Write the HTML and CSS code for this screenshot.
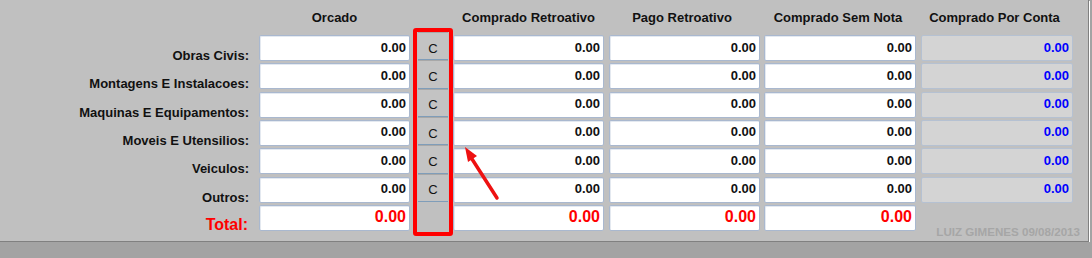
FILE: index.html
```html
<!DOCTYPE html>
<html lang="en">
<head>
  <meta charset="UTF-8">
  <title>Orcamento</title>
  <link rel="stylesheet" href="styles.css">
</head>
<body>
  <div class="panel">
    <div class="grid">
      <div></div>
      <div class="head">Orcado</div>
      <div></div>
      <div class="head">Comprado Retroativo</div>
      <div class="head">Pago Retroativo</div>
      <div class="head">Comprado Sem Nota</div>
      <div class="head">Comprado Por Conta</div>

      <div class="lbl">Obras Civis:</div>
      <input class="num c1" value="0.00" readonly>
      <input class="num c2" value="0.00" readonly>
      <input class="num c3" value="0.00" readonly>
      <input class="num c4" value="0.00" readonly>
      <input class="num c5 off" value="0.00" readonly>

      <div class="lbl">Montagens E Instalacoes:</div>
      <input class="num c1" value="0.00" readonly>
      <input class="num c2" value="0.00" readonly>
      <input class="num c3" value="0.00" readonly>
      <input class="num c4" value="0.00" readonly>
      <input class="num c5 off" value="0.00" readonly>

      <div class="lbl">Maquinas E Equipamentos:</div>
      <input class="num c1" value="0.00" readonly>
      <input class="num c2" value="0.00" readonly>
      <input class="num c3" value="0.00" readonly>
      <input class="num c4" value="0.00" readonly>
      <input class="num c5 off" value="0.00" readonly>

      <div class="lbl">Moveis E Utensilios:</div>
      <input class="num c1" value="0.00" readonly>
      <input class="num c2" value="0.00" readonly>
      <input class="num c3" value="0.00" readonly>
      <input class="num c4" value="0.00" readonly>
      <input class="num c5 off" value="0.00" readonly>

      <div class="lbl">Veiculos:</div>
      <input class="num c1" value="0.00" readonly>
      <input class="num c2" value="0.00" readonly>
      <input class="num c3" value="0.00" readonly>
      <input class="num c4" value="0.00" readonly>
      <input class="num c5 off" value="0.00" readonly>

      <div class="lbl">Outros:</div>
      <input class="num c1" value="0.00" readonly>
      <input class="num c2" value="0.00" readonly>
      <input class="num c3" value="0.00" readonly>
      <input class="num c4" value="0.00" readonly>
      <input class="num c5 off" value="0.00" readonly>

      <div class="lbl total">Total:</div>
      <input class="num c1 red" value="0.00" readonly>
      <input class="num c2 red" value="0.00" readonly>
      <input class="num c3 red" value="0.00" readonly>
      <input class="num c4 red" value="0.00" readonly>
      <div class="mark">LUIZ GIMENES 09/08/2013</div>

      <div class="cbox">
        <button class="cbtn">C</button>
        <button class="cbtn">C</button>
        <button class="cbtn">C</button>
        <button class="cbtn">C</button>
        <button class="cbtn">C</button>
        <button class="cbtn">C</button>
      </div>
    </div>

    <svg class="arrow" width="50" height="65" viewBox="0 0 50 65">
      <line x1="42" y1="58" x2="17" y2="19" stroke="#ee1111" stroke-width="3.5" stroke-linecap="round"/>
      <polygon points="10,7 22,16 13,22" fill="#ee1111"/>
    </svg>
  </div>
</body>
</html>
```

FILE: styles.css
```css
body { margin: 0; background: #a3a3a3; font-family: "Liberation Sans", Arial, sans-serif; }

.panel {
  position: relative;
  width: 1088px;
  height: 241px;
  background: #c0c0c0;
  border-right: 1px solid #808080;
  border-bottom: 1px solid #808080;
  box-shadow: 1px 1px 0 #ffffff;
}

.grid {
  display: grid;
  grid-template-columns: 259px 151px 43px 151px 156px 156px 157px;
  grid-template-rows: 35px repeat(7, 28.333px);
}

.head { font-size: 13px; font-weight: bold; color: #111; text-align: center; line-height: 16px; align-self: center; }
.grid > .head:nth-child(4) { grid-column: 4; }

.lbl {
  grid-column: 1;
  font-size: 13px;
  font-weight: bold;
  color: #111;
  text-align: right;
  padding: 13px 10px 0 0;
  line-height: 16px;
  white-space: nowrap;
}
.lbl.total { color: #ff0000; font-size: 16px; padding-top: 12px; padding-right: 11px; }

.num {
  box-sizing: border-box;
  height: 26px;
  margin: 0;
  padding: 0 3px 2px 0;
  border: 1px solid #a9b8cf;
  border-radius: 2px;
  box-shadow: inset 1px 1px 0 #e4e9f0;
  background: #ffffff;
  color: #111;
  font-family: "Liberation Sans", Arial, sans-serif;
  font-size: 13px;
  font-weight: bold;
  text-align: right;
  outline: none;
}
.c1 { grid-column: 2; width: 151px; }
.c2 { grid-column: 4; width: 151px; }
.c3 { grid-column: 5; width: 151px; justify-self: end; }
.c4 { grid-column: 6; width: 152px; justify-self: end; }
.c5 { grid-column: 7; width: 152px; justify-self: end; }
.num.off { background: #d4d4d4; color: #0000ff; border-color: #b5c1d2; box-shadow: none; }
.num.red { color: #ff0000; font-size: 16px; padding-bottom: 1px; }

.mark {
  grid-column: 7;
  grid-row: 8;
  justify-self: end;
  align-self: end;
  margin: 0 -7px -5px 0;
  font-size: 11.6px;
  line-height: 12px;
  font-weight: bold;
  color: #a6a6a6;
  white-space: nowrap;
}

.cbox {
  grid-column: 3;
  grid-row: 2 / span 7;
  justify-self: end;
  width: 40px;
  box-sizing: border-box;
  margin: -7px 0 -3px 0;
  border: 4px solid #ff0000;
  border-radius: 3px;
  display: flex;
  flex-direction: column;
}

.cbtn {
  box-sizing: border-box;
  height: 28.333px;
  margin: 0 1px;
  padding: 4px 0 0 0;
  border: 0;
  border-top: 1px solid #a8a8a8;
  border-bottom: 1px solid #7f9db9;
  background: #c3c3c3;
  font-family: "Liberation Sans", Arial, sans-serif;
  font-size: 13px;
  color: #111;
}

.arrow { position: absolute; left: 455px; top: 140px; }
```
